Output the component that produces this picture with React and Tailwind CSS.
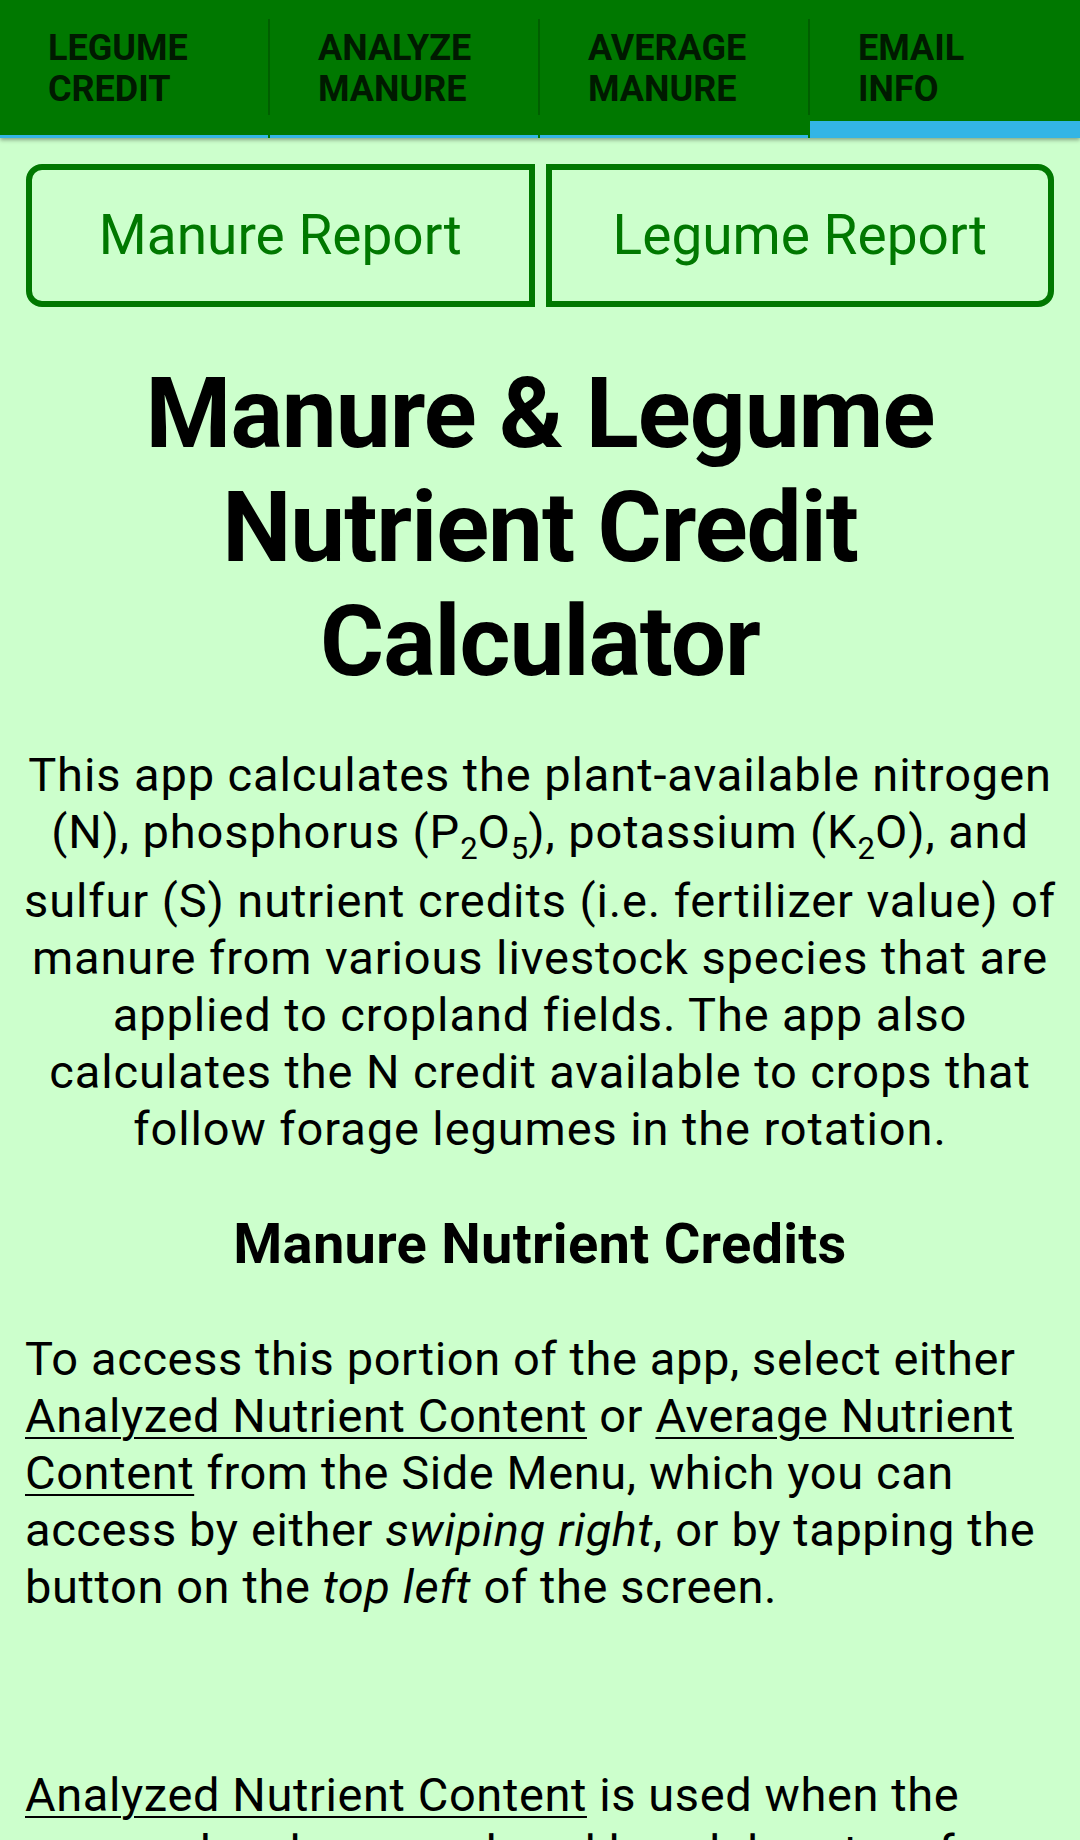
import React from 'react';

const tabs = [
  { top: 'LEGUME', bottom: 'CREDIT' },
  { top: 'ANALYZE', bottom: 'MANURE' },
  { top: 'AVERAGE', bottom: 'MANURE' },
  { top: 'EMAIL', bottom: 'INFO', active: true },
];

// subscript sits low and pushes the next line down a bit, like the app does
const Sub = ({ children }) => (
  <span className="text-[31px] tracking-normal leading-[46px] align-[-11px]">{children}</span>
);

const Link = ({ children }) => (
  <span className="underline decoration-2 underline-offset-[5px]">{children}</span>
);

const App = () => {
  return (
    <div className="min-h-screen bg-[#ccffcc] font-['Roboto','Noto_Sans',sans-serif] text-black">
      {/* Tab bar */}
      <div className="relative z-10 flex h-[138px] bg-[#007800] shadow-[0_2px_4px_rgba(0,0,0,0.35)]">
        {tabs.map((tab, i) => (
          <div key={tab.top} className="flex w-1/4">
            <div
              className={
                tab.active
                  ? 'flex flex-1 items-center border-b-[17px] border-[#33b5e5] pl-[48px] pt-[17px]'
                  : 'flex flex-1 items-center border-b-[3px] border-[#33b5e5] pl-[48px] pt-[3px]'
              }
            >
              <div className="text-[36px] font-bold leading-[41px] text-[#001a00]">
                {tab.top}
                <br />
                {tab.bottom}
              </div>
            </div>
            {i < tabs.length - 1 && (
              <div className="mt-[19px] h-[96px] w-[2px] bg-[#005f00]" />
            )}
          </div>
        ))}
      </div>

      {/* Report buttons */}
      <div className="flex gap-[11px] px-[26px] pt-[26px]">
        <button className="flex h-[143px] flex-1 items-center justify-center rounded-l-[16px] border-[6px] border-[#007800] text-[55px] text-[#007800]">
          Manure Report
        </button>
        <button className="flex h-[143px] flex-1 items-center justify-center rounded-r-[16px] border-[6px] border-[#007800] text-[55px] text-[#007800]">
          Legume Report
        </button>
      </div>

      <h1 className="mt-[50px] text-center text-[98px] font-bold leading-[114px] tracking-[-1px]">
        Manure &amp; Legume
        <br />
        Nutrient Credit
        <br />
        Calculator
      </h1>

      <p className="mt-[47px] px-[20px] text-center text-[47px] leading-[57px] tracking-[0.9px]">
        This app calculates the plant-available nitrogen (N), phosphorus (P<Sub>2</Sub>O<Sub>5</Sub>),
        potassium (K<Sub>2</Sub>O), and sulfur (S) nutrient credits (i.e. fertilizer value) of manure
        from various livestock species that are applied to cropland fields. The app also calculates
        the N credit available to crops that follow forage legumes in the rotation.
      </p>

      <h2 className="mt-[45px] text-center text-[56px] font-bold tracking-[0.3px]">
        Manure Nutrient Credits
      </h2>

      <p className="mt-[44px] px-[25px] text-[47px] leading-[57px] tracking-[0.6px]">
        To access this portion of the app, select either <Link>Analyzed Nutrient Content</Link> or{' '}
        <Link>Average Nutrient Content</Link> from the Side Menu, which you can access by
        either <i>swiping right</i>, or by tapping the button on the <i>top left</i> of the screen.
      </p>

      <p className="mt-[151px] px-[25px] pb-[40px] text-[47px] leading-[57px] tracking-[0.6px]">
        <Link>Analyzed Nutrient Content</Link> is used when the manure has been analyzed by a
        laboratory for its nutrient content.
      </p>
    </div>
  );
};

export default App;
